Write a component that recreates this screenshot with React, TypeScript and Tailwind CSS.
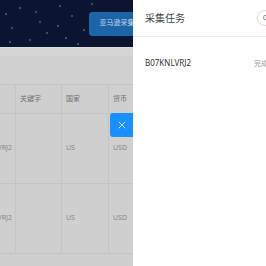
import { X } from "lucide-react";

const stars = [
  [60, 6], [72, 16], [40, 22], [47, 33], [12, 28], [92, 4], [30, 40], [58, 26], [6, 14], [20, 8], [84, 30], [66, 38], [36, 12], [10, 42], [78, 44],
];

const rows = ["B07KNLVRJ2", "B07KNLVRJ2"];

export default function App() {
  return (
    <div
      className="flex h-[266px] w-[266px] overflow-hidden bg-white"
      style={{ fontFamily: '"Noto Sans", "Noto Sans CJK SC", sans-serif' }}
    >
      {/* dimmed page */}
      <div className="relative flex w-[133px] shrink-0 flex-col overflow-hidden bg-[#cfcfcf]">
        <div className="relative flex h-[47px] shrink-0 items-center justify-end bg-[#0b1431]">
          <svg className="absolute inset-0" width="133" height="47">
            {stars.map(([x, y], i) => (
              <circle key={i} cx={x} cy={y} r="0.7" fill="#9aa6c4" />
            ))}
          </svg>
          <div className="relative -mr-[12px] flex h-[24px] w-[56px] items-center justify-center rounded-[3px] bg-[#1c64a8] text-[7px] whitespace-nowrap text-[#c9d8ea]">
            亚马逊采集
          </div>
        </div>
        <div className="h-[9px] shrink-0 border-t border-[#dedede] bg-[#d6d6d6]" />
        <div className="h-[29px] shrink-0 border-b border-[#c4c4c4] bg-[#d0d0d0]" />
        <div className="grid grid-cols-[16px_46px_47px_1fr] text-[7px] text-[#6f6f6f]">
          <div className="h-[29px] border-r border-b border-[#c4c4c4]" />
          <div className="flex h-[29px] items-center border-r border-b border-[#c4c4c4] pl-[4px]">关键字</div>
          <div className="flex h-[29px] items-center border-r border-b border-[#c4c4c4] pl-[4px]">国家</div>
          <div className="flex h-[29px] items-center border-b border-[#c4c4c4] pl-[4px]">货币</div>
          {rows.map((r, i) => (
            <div key={i} className="contents">
              <div className="flex h-[70px] items-center justify-end overflow-hidden border-r border-b border-[#c4c4c4] pr-[3px] text-[#888]">
                <span className="whitespace-nowrap">{r}</span>
              </div>
              <div className="h-[70px] border-r border-b border-[#c4c4c4]" />
              <div className="flex h-[70px] items-center border-r border-b border-[#c4c4c4] pl-[4px] text-[#888]">US</div>
              <div className="flex h-[70px] items-center border-b border-[#c4c4c4] pl-[4px] text-[#888]">USD</div>
            </div>
          ))}
        </div>
        <button className="absolute top-[113px] right-0 flex h-[24px] w-[23px] items-center justify-center rounded-l-[3px] bg-[#1890ff] text-white">
          <X size={12} strokeWidth={1.6} />
        </button>
      </div>

      {/* drawer */}
      <div className="flex flex-1 flex-col bg-white">
        <div className="flex h-[37px] shrink-0 items-center justify-between border-b border-[#ececec] pl-[12px]">
          <span className="text-[10px] text-[#444]">采集任务</span>
          <div className="-mr-[7px] flex h-[16px] w-[16px] items-center justify-center rounded-full border border-[#d9d9d9] text-[7px] text-[#666]">
            C
          </div>
        </div>
        <div className="flex items-center justify-between pt-[19px] pl-[12px]">
          <span className="text-[8px] text-[#333]">B07KNLVRJ2</span>
          <span className="-mr-[2px] pt-[3px] text-[7px] whitespace-nowrap text-[#999]">完成</span>
        </div>
      </div>
    </div>
  );
}
